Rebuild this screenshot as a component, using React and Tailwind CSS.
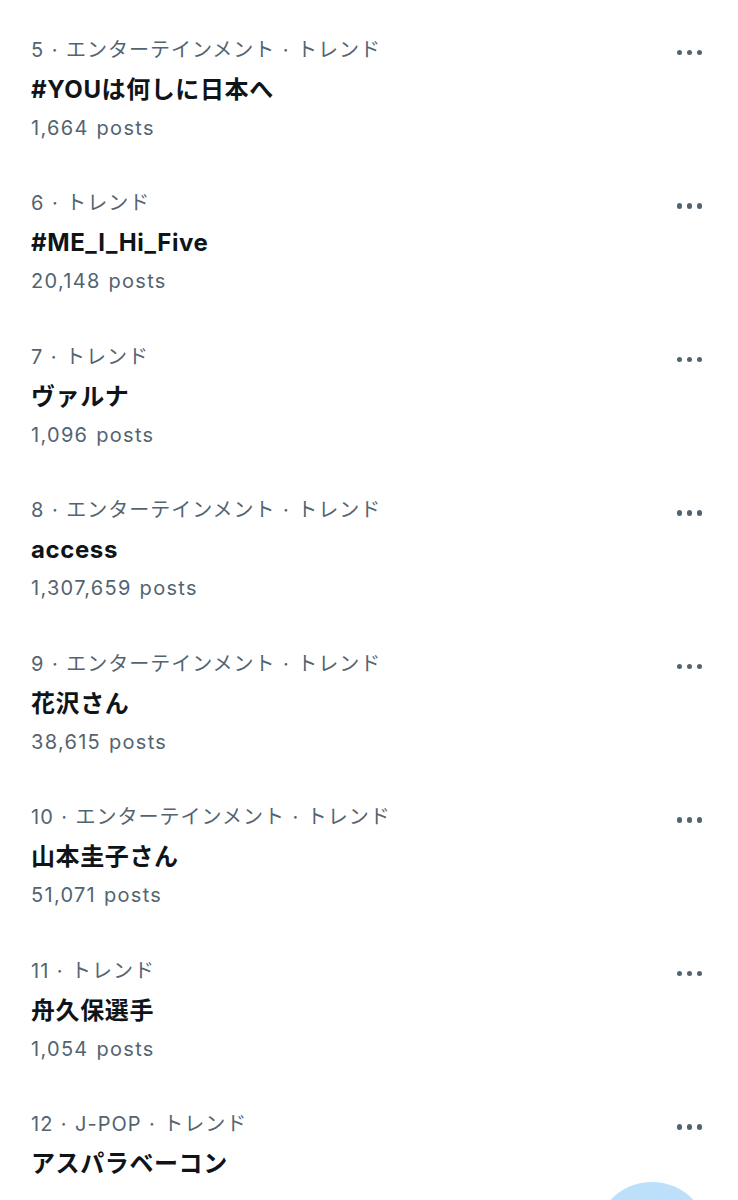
const trends = [
  { rank: 5, meta: ['エンターテインメント', 'トレンド'], title: '#YOUは何しに日本へ', posts: '1,664' },
  { rank: 6, meta: ['トレンド'], title: '#ME_I_Hi_Five', posts: '20,148' },
  { rank: 7, meta: ['トレンド'], title: 'ヴァルナ', posts: '1,096' },
  { rank: 8, meta: ['エンターテインメント', 'トレンド'], title: 'access', posts: '1,307,659' },
  { rank: 9, meta: ['エンターテインメント', 'トレンド'], title: '花沢さん', posts: '38,615' },
  { rank: 10, meta: ['エンターテインメント', 'トレンド'], title: '山本圭子さん', posts: '51,071' },
  { rank: 11, meta: ['トレンド'], title: '舟久保選手', posts: '1,054' },
  { rank: 12, meta: ['J-POP', 'トレンド'], title: 'アスパラベーコン', posts: null },
];

function MoreDots() {
  return (
    <div className="flex items-center gap-[4.5px] mt-[19px]">
      <span className="w-[5.5px] h-[5.5px] rounded-full bg-[#536471]" />
      <span className="w-[5.5px] h-[5.5px] rounded-full bg-[#536471]" />
      <span className="w-[5.5px] h-[5.5px] rounded-full bg-[#536471]" />
    </div>
  );
}

export default function App() {
  return (
    <div
      className="relative w-[738px] h-[1200px] overflow-hidden bg-white"
      style={{ fontFamily: 'Inter, "Noto Sans CJK JP", sans-serif' }}
    >
      <div className="pt-[30.5px] pl-[31px] pr-[36px]">
        {trends.map((t) => (
          <div key={t.rank} className="h-[153.57px] flex justify-between items-start">
            <div>
              <p className="text-[20px] leading-[39px] text-[#536471] tracking-[1px] whitespace-nowrap">
                {[String(t.rank), ...t.meta].map((part, i) => (
                  <span key={i}>
                    {i > 0 && <span className="mx-[7.5px]">·</span>}
                    {part}
                  </span>
                ))}
              </p>
              <p className="text-[24px] leading-[39px] font-bold text-[#0f1419] tracking-[0.6px]">{t.title}</p>
              {t.posts && (
                <p className="text-[20px] leading-[39px] text-[#536471] tracking-[1.3px] [word-spacing:1px]">
                  {t.posts} posts
                </p>
              )}
            </div>
            <MoreDots />
          </div>
        ))}
      </div>

      <div className="absolute left-[595px] top-[1182px] w-[114px] h-[114px] rounded-full bg-[#bcdffa]" />
    </div>
  );
}
